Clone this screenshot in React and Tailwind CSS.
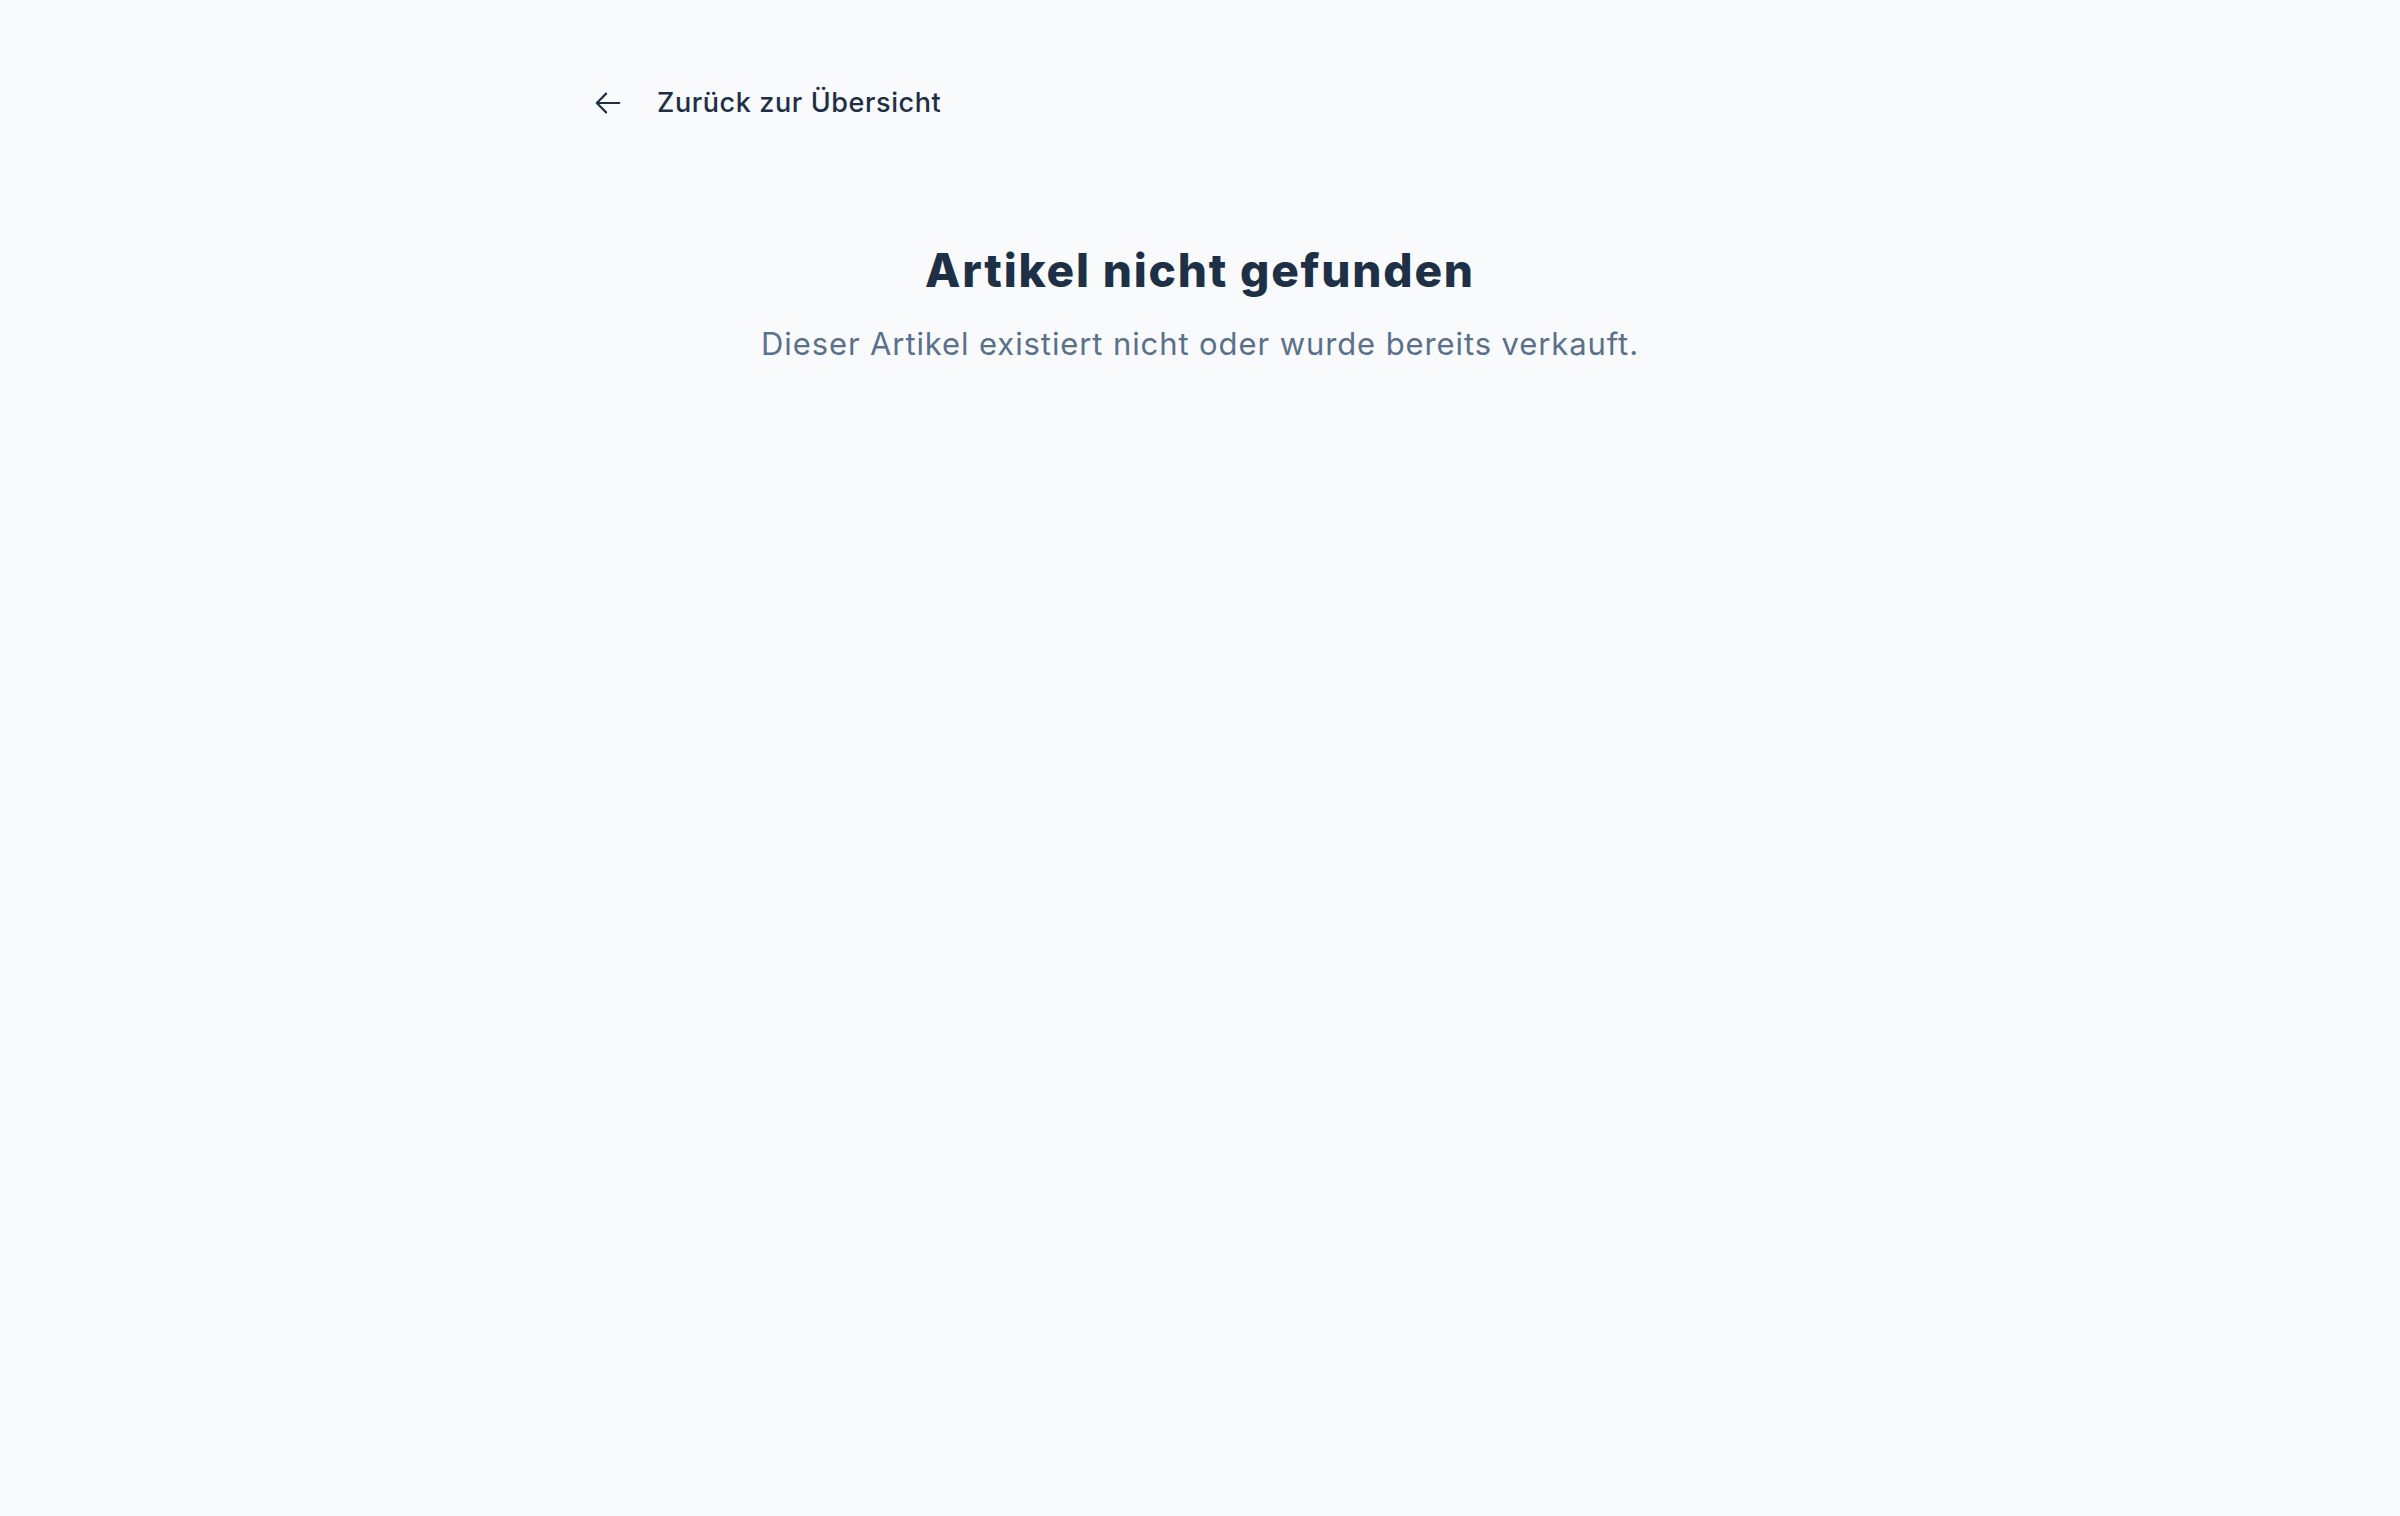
import React from 'react'

export default function App() {
  return (
    <div
      className="min-h-screen bg-[#f8fafc]"
      style={{ fontFamily: 'Inter, "Noto Sans", sans-serif' }}
    >
      <div className="mx-auto w-[1214px] pt-[83px]">
        {/* Zurück-Link */}
        <a href="#" className="inline-flex items-center gap-[34px] text-[#1e2f45]">
          <svg
            viewBox="0 0 24 24"
            fill="none"
            stroke="currentColor"
            strokeWidth={1.7}
            strokeLinecap="round"
            strokeLinejoin="round"
            className="w-[30px] h-[30px]"
          >
            <path d="M10.5 19.5 3 12m0 0 7.5-7.5M3 12h18" />
          </svg>
          <span className="text-[27px] leading-[40px] font-medium tracking-[0.6px]">
            Zurück zur Übersicht
          </span>
        </a>

        {/* Hinweis */}
        <div className="mt-[118px] text-center">
          <h1 className="text-[46px] leading-[56px] font-extrabold text-[#1e3046] tracking-[1.8px]">
            Artikel nicht gefunden
          </h1>
          <p className="mt-[24px] text-[31px] leading-[44px] text-[#5b708b] tracking-[0.9px]">
            Dieser Artikel existiert nicht oder wurde bereits verkauft.
          </p>
        </div>
      </div>
    </div>
  )
}
